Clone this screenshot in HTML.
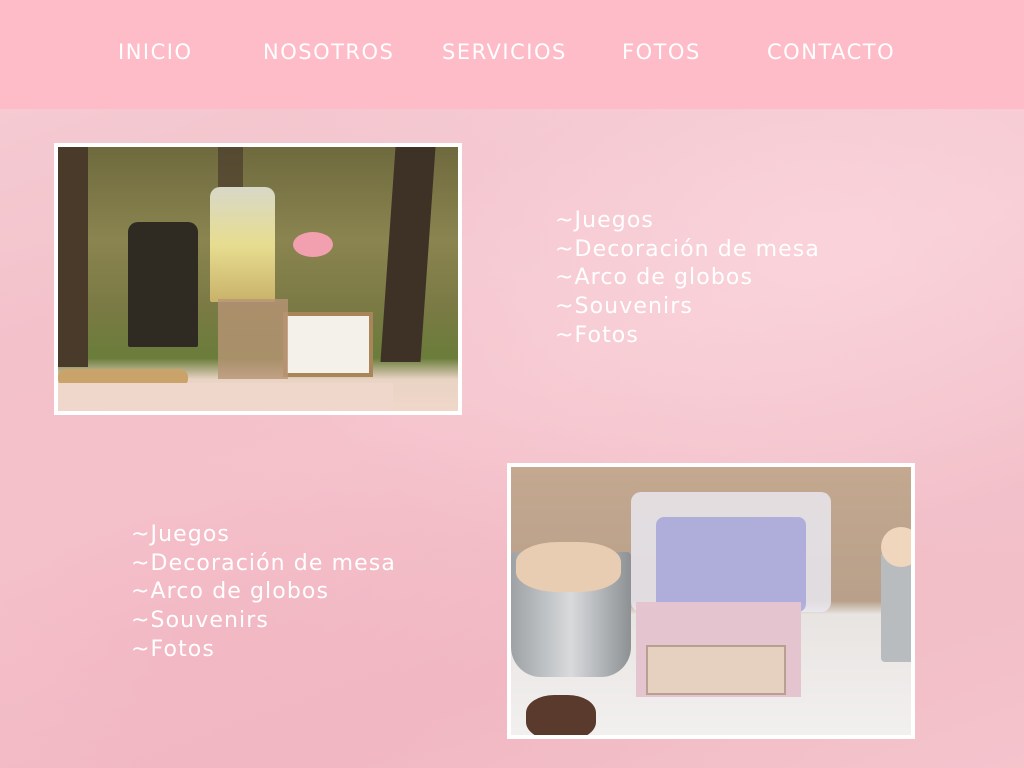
<!DOCTYPE html>
<html><head><meta charset="utf-8"><style>
*{margin:0;padding:0;box-sizing:border-box}
body{width:1024px;height:768px;overflow:hidden;position:relative;font-family:"DejaVu Sans","Liberation Sans",sans-serif;
background:linear-gradient(160deg,#f6cdd4 0%,#f3c3cc 30%,#f6c8d0 50%,#f1bcc6 75%,#f4c3cc 100%);}
header{position:absolute;left:0;top:0;width:1024px;height:109px;background:#fdbcc8}
header span{position:absolute;top:38px;color:#fff;font-size:21px;letter-spacing:1.5px;font-weight:400;line-height:28px}
.list{position:absolute;color:#fff;font-size:22px;line-height:28.7px;letter-spacing:1.1px}
.ph{position:absolute;border:4px solid #fff;overflow:hidden}
.ph div{position:absolute}
</style></head><body>
<div style="position:absolute;left:0;top:109px;width:1024px;height:659px;background:radial-gradient(ellipse at 80% 20%,rgba(255,225,232,.45),transparent 50%),radial-gradient(ellipse at 20% 80%,rgba(240,170,185,.4),transparent 55%)"></div>
<header>
<span style="left:118px">INICIO</span>
<span style="left:263px">NOSOTROS</span>
<span style="left:442px">SERVICIOS</span>
<span style="left:622px">FOTOS</span>
<span style="left:767px">CONTACTO</span>
</header>

<div class="ph" style="left:54px;top:143px;width:408px;height:272px;background:linear-gradient(180deg,#6f6a3e 0%,#8a8450 35%,#7b7a45 60%,#6a7d3a 80%,#e9d3c4 88%,#efd7c9 100%)">
<div style="left:0;top:0;width:30px;height:220px;background:#4a3a2a"></div>
<div style="left:330px;top:0;width:40px;height:215px;background:#3e3126;transform:skewX(-4deg)"></div>
<div style="left:160px;top:0;width:25px;height:110px;background:#4a3c2c;opacity:.7"></div>
<div style="left:70px;top:75px;width:70px;height:125px;background:#2f2a22;border-radius:10px 10px 2px 2px"></div>
<div style="left:152px;top:40px;width:65px;height:115px;background:linear-gradient(180deg,#d8d8c8 0%,#e7dd90 50%,#c9b26a 100%);border-radius:10px 10px 2px 2px"></div>
<div style="left:225px;top:165px;width:90px;height:65px;background:#f4f1ea;border:4px solid #a9865a"></div>
<div style="left:0;top:222px;width:130px;height:18px;background:#c9a36a;border-radius:8px"></div>
<div style="left:0;top:236px;width:335px;height:40px;background:#efd8cb"></div>
<div style="left:160px;top:152px;width:70px;height:80px;background:#b89575;opacity:.8"></div>
<div style="left:235px;top:85px;width:40px;height:25px;background:#f2a0b0;border-radius:50%"></div>
</div>

<div class="list" style="left:555px;top:207px">~Juegos<br>~Decoración de mesa<br>~Arco de globos<br>~Souvenirs<br>~Fotos</div>
<div class="list" style="left:131px;top:521px">~Juegos<br>~Decoración de mesa<br>~Arco de globos<br>~Souvenirs<br>~Fotos</div>

<div class="ph" style="left:507px;top:463px;width:408px;height:276px;background:linear-gradient(180deg,#c4a890 0%,#b8a08a 50%,#e8e4e2 55%,#f2f0ef 100%)">
<div style="left:0;top:85px;width:120px;height:125px;background:linear-gradient(90deg,#9ea2a4,#d8dadc,#8d9194);border-radius:4px 4px 30px 30px"></div>
<div style="left:5px;top:75px;width:105px;height:50px;background:#e9cdb3;border-radius:40%"></div>
<div style="left:120px;top:25px;width:200px;height:120px;background:rgba(235,235,245,.8);border-radius:10px"></div>
<div style="left:145px;top:50px;width:150px;height:95px;background:#8d8fd6;opacity:.6;border-radius:8px"></div>
<div style="left:125px;top:135px;width:165px;height:95px;background:#e3c4cf"></div>
<div style="left:135px;top:178px;width:140px;height:50px;background:#e6d0c0;border:2px solid #b7a090"></div>
<div style="left:370px;top:85px;width:40px;height:110px;background:#b9bcbe;border-radius:4px"></div>
<div style="left:370px;top:60px;width:40px;height:40px;background:#efd6bc;border-radius:50%"></div>
<div style="left:15px;top:228px;width:70px;height:45px;background:#5a3a2c;border-radius:40%"></div>
</div>
</body></html>
